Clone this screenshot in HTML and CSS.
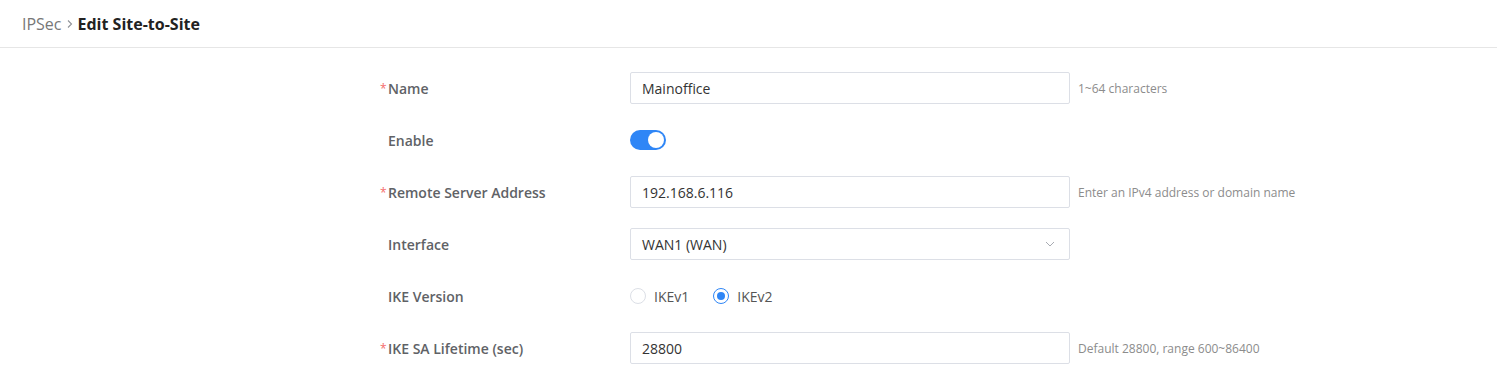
FILE: index.html
```html
<!DOCTYPE html>
<html>
<head>
    <link rel="stylesheet" href="styles.css">
</head>
<body>
    <div class="header">
        <span class="crumb">IPSec</span>
        <svg class="sep" width="8" height="10" viewBox="0 0 8 10"><path d="M2 1.5 L5.5 5 L2 8.5" fill="none" stroke="#909399" stroke-width="1.1"/></svg>
        <span class="title">Edit Site-to-Site</span>
    </div>
    <div class="form">
        <div class="label"><span class="req">*</span>Name</div>
        <div class="field"><input type="text" class="input" value="Mainoffice"></div>
        <div class="hint">1~64 characters</div>

        <div class="label"><span class="req"></span>Enable</div>
        <div class="field"><span class="switch"><span class="knob"></span></span></div>
        <div class="hint"></div>

        <div class="label"><span class="req">*</span>Remote Server Address</div>
        <div class="field"><input type="text" class="input" value="192.168.6.116"></div>
        <div class="hint">Enter an IPv4 address or domain name</div>

        <div class="label"><span class="req"></span>Interface</div>
        <div class="field">
            <div class="select">
                <span>WAN1 (WAN)</span>
                <svg width="10" height="6" viewBox="0 0 10 6"><path d="M1 1 L5 5 L9 1" fill="none" stroke="#a8abb2" stroke-width="1"/></svg>
            </div>
        </div>
        <div class="hint"></div>

        <div class="label"><span class="req"></span>IKE Version</div>
        <div class="field radios">
            <label class="radio"><span class="dot"></span>IKEv1</label>
            <label class="radio on"><span class="dot"></span>IKEv2</label>
        </div>
        <div class="hint"></div>

        <div class="label"><span class="req">*</span>IKE SA Lifetime (sec)</div>
        <div class="field"><input type="text" class="input" value="28800"></div>
        <div class="hint">Default 28800, range 600~86400</div>
    </div>
</body>
</html>
```

FILE: styles.css
```css
body {
    font-family: "Open Sans", Arial, sans-serif;
    margin: 0;
    background: #fff;
    color: #303133;
}
.header {
    height: 47px;
    display: flex;
    align-items: center;
    padding-left: 22px;
    border-bottom: 1px solid #e6e6e6;
    font-size: 16px;
}
.crumb {
    color: #777;
}
.sep {
    margin: 0 4px 0 4px;
}
.title {
    font-weight: 700;
    color: #222;
}
.form {
    display: grid;
    grid-template-columns: 244px 440px auto;
    column-gap: 8px;
    row-gap: 20px;
    padding: 24px 0 0 378px;
}
.label {
    display: flex;
    align-items: center;
    height: 32px;
    font-size: 14px;
    font-weight: 600;
    color: #606266;
    padding-left: 2px;
}
.req {
    width: 8px;
    font-size: 12px;
    color: #f56c6c;
    font-weight: 400;
}
.field {
    display: flex;
    align-items: center;
    height: 32px;
}
.input {
    box-sizing: border-box;
    width: 440px;
    height: 32px;
    border: 1px solid #dcdfe6;
    border-radius: 2px;
    padding: 0 11px;
    font-family: inherit;
    font-size: 14px;
    color: #333;
    outline: none;
}
.hint {
    display: flex;
    align-items: center;
    height: 32px;
    font-size: 12px;
    color: #8c8c8c;
}
.switch {
    width: 36px;
    height: 20px;
    border-radius: 10px;
    background: #2f86f6;
    display: flex;
    align-items: center;
    justify-content: flex-end;
    padding: 0 2px;
    box-sizing: border-box;
}
.knob {
    width: 16px;
    height: 16px;
    border-radius: 50%;
    background: #fff;
}
.select {
    box-sizing: border-box;
    width: 440px;
    height: 32px;
    border: 1px solid #dcdfe6;
    border-radius: 2px;
    padding: 0 14px 0 11px;
    display: flex;
    align-items: center;
    justify-content: space-between;
    font-size: 14px;
    color: #333;
}
.radios {
    gap: 24px;
}
.radio {
    display: flex;
    align-items: center;
    font-size: 14px;
    color: #555;
}
.dot {
    box-sizing: border-box;
    width: 16px;
    height: 16px;
    border-radius: 50%;
    border: 1px solid #dcdfe6;
    margin-right: 8px;
    display: flex;
    align-items: center;
    justify-content: center;
}
.radio.on .dot {
    border-color: #2f86f6;
}
.radio.on .dot::after {
    content: "";
    width: 8px;
    height: 8px;
    border-radius: 50%;
    background: #2f86f6;
}
```
